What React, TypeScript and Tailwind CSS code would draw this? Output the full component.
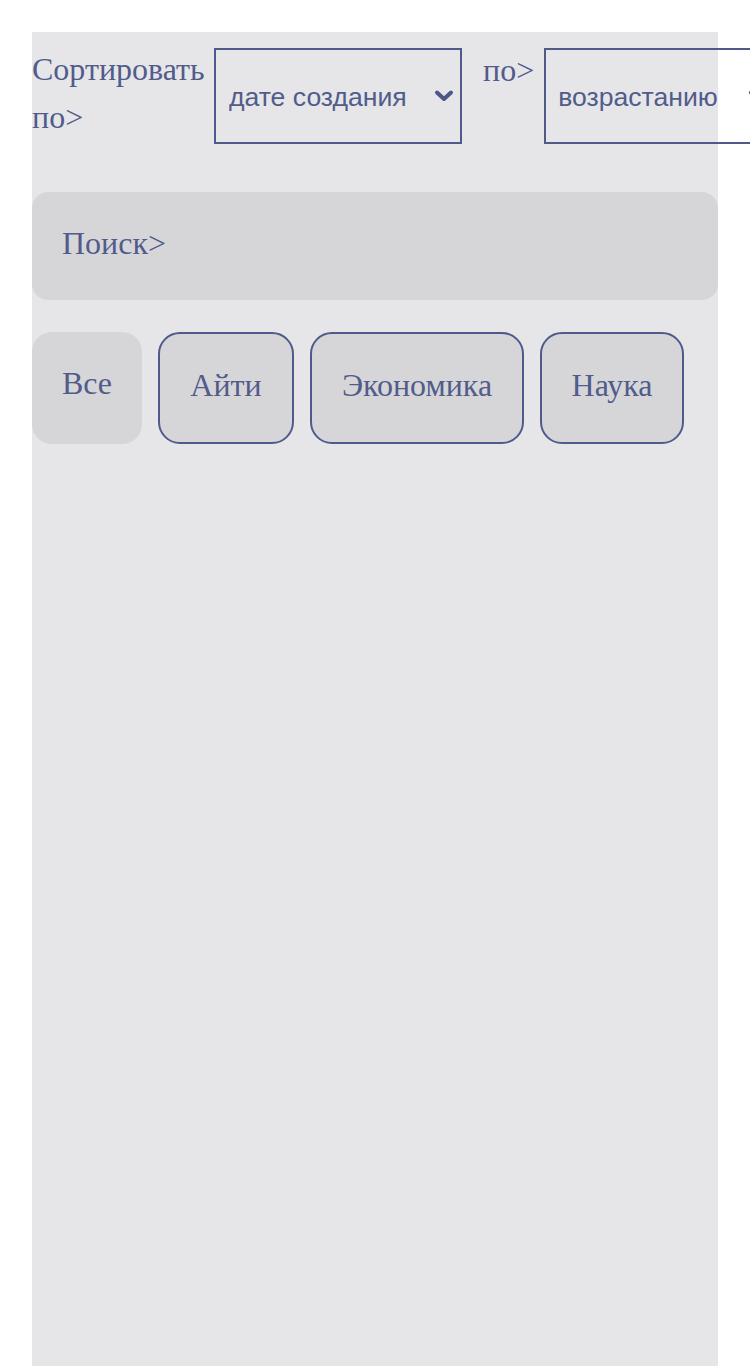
import React from "react";

const Chevron = () => (
  <svg
    width="20"
    height="14"
    viewBox="0 0 20 14"
    className="pointer-events-none absolute top-1/2 -translate-y-1/2"
    style={{ right: 8 }}
  >
    <path d="M3 3.5 L10 10 L17 3.5" fill="none" stroke="#4c5788" strokeWidth="4" strokeLinecap="round" strokeLinejoin="round" />
  </svg>
);

export default function App() {
  const serif = { fontFamily: '"Liberation Serif", "Times New Roman", serif' };
  const sans = { fontFamily: '"Liberation Sans", Arial, sans-serif' };
  return (
    <div className="w-[750px] h-[1366px] overflow-hidden bg-white pt-8 pl-8">
      <div className="w-[686px] h-[1334px] bg-[#e6e6e9] pt-4 text-[#515c8b]" style={serif}>
        <div className="flex items-start">
          <div className="w-[182px] shrink-0 text-[32px] leading-[48px] -mt-[3px]">Сортировать по&gt;</div>
          <div className="relative w-[248px] h-[96px] shrink-0">
            <select
              className="w-full h-full appearance-none bg-transparent border-2 border-[#4f5a8a] pl-[13px] pt-[3px] text-[26.6px] text-[#515c8b] outline-none"
              style={sans}
              defaultValue="date"
            >
              <option value="date">дате создания</option>
            </select>
            <Chevron />
          </div>
          <div className="ml-[21px] shrink-0 text-[32px] leading-[48px] -mt-[2px]">по&gt;</div>
          <div className="relative ml-[10px] w-[232px] h-[96px] shrink-0">
            <select
              className="w-full h-full appearance-none bg-transparent border-2 border-[#4f5a8a] pl-[12px] pt-[3px] text-[26.6px] text-[#515c8b] outline-none"
              style={sans}
              defaultValue="asc"
            >
              <option value="asc">возрастанию</option>
            </select>
            <Chevron />
          </div>
        </div>

        <div className="mt-12 h-[108px] rounded-[16px] bg-[#d6d6d9] flex items-center pl-[30px] text-[32px] pb-[6px]">
          Поиск&gt;
        </div>

        <div className="mt-8 flex gap-4">
          <div className="w-[110px] h-[112px] shrink-0 rounded-[20px] bg-[#d6d6d9] flex items-center justify-center text-[32px] pb-[10px]">Все</div>
          <div className="w-[136px] h-[112px] shrink-0 rounded-[22px] bg-[#d6d6d9] border-2 border-[#4f5a8a] flex items-center justify-center text-[32px] pb-[6px]">
            Айти
          </div>
          <div className="w-[214px] h-[112px] shrink-0 rounded-[22px] bg-[#d6d6d9] border-2 border-[#4f5a8a] flex items-center justify-center text-[32px] pb-[6px]">
            Экономика
          </div>
          <div className="w-[144px] h-[112px] shrink-0 rounded-[22px] bg-[#d6d6d9] border-2 border-[#4f5a8a] flex items-center justify-center text-[32px] pb-[6px]">
            Наука
          </div>
        </div>
      </div>
    </div>
  );
}
